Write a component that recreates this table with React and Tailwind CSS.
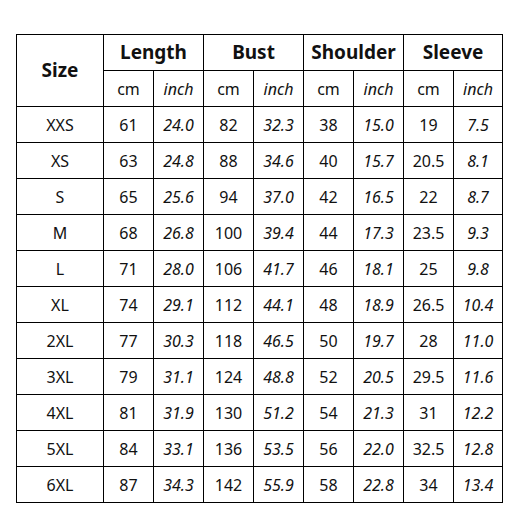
import React from 'react';

const rows = [
  ['XXS', '61', '24.0', '82', '32.3', '38', '15.0', '19', '7.5'],
  ['XS', '63', '24.8', '88', '34.6', '40', '15.7', '20.5', '8.1'],
  ['S', '65', '25.6', '94', '37.0', '42', '16.5', '22', '8.7'],
  ['M', '68', '26.8', '100', '39.4', '44', '17.3', '23.5', '9.3'],
  ['L', '71', '28.0', '106', '41.7', '46', '18.1', '25', '9.8'],
  ['XL', '74', '29.1', '112', '44.1', '48', '18.9', '26.5', '10.4'],
  ['2XL', '77', '30.3', '118', '46.5', '50', '19.7', '28', '11.0'],
  ['3XL', '79', '31.1', '124', '48.8', '52', '20.5', '29.5', '11.6'],
  ['4XL', '81', '31.9', '130', '51.2', '54', '21.3', '31', '12.2'],
  ['5XL', '84', '33.1', '136', '53.5', '56', '22.0', '32.5', '12.8'],
  ['6XL', '87', '34.3', '142', '55.9', '58', '22.8', '34', '13.4'],
];

const groups = ['Length', 'Bust', 'Shoulder', 'Sleeve'];

const cell = "border-[1.5px] border-black text-center p-0 h-[36px] whitespace-nowrap";

export default function App() {
  return (
    <div className="w-[508px] h-[524px] bg-white pt-[34px] pl-[16px]" style={{ fontFamily: '"Noto Sans", "Open Sans", sans-serif' }}>
      <table className="table-fixed border-collapse w-[486px] text-[#111]">
        <colgroup>
          <col className="w-[87px]" />
          <col className="w-[50px]" /><col className="w-[50px]" />
          <col className="w-[50px]" /><col className="w-[50px]" />
          <col className="w-[50px]" /><col className="w-[50px]" />
          <col className="w-[50px]" /><col className="w-[49px]" />
        </colgroup>
        <thead>
          <tr>
            <th rowSpan={2} className={`${cell} text-[19px] font-bold`}>Size</th>
            {groups.map((g) => (
              <th key={g} colSpan={2} className={`${cell} text-[19px] font-bold`}>{g}</th>
            ))}
          </tr>
          <tr>
            {groups.map((g) => (
              <React.Fragment key={g}>
                <td className={`${cell} text-[16px]`}>cm</td>
                <td className={`${cell} text-[16px] italic`}>inch</td>
              </React.Fragment>
            ))}
          </tr>
        </thead>
        <tbody>
          {rows.map((r) => (
            <tr key={r[0]}>
              {r.map((v, i) => (
                <td key={i} className={`${cell} text-[16px] ${i > 0 && i % 2 === 0 ? 'italic' : ''}`}>{v}</td>
              ))}
            </tr>
          ))}
        </tbody>
      </table>
    </div>
  );
}
